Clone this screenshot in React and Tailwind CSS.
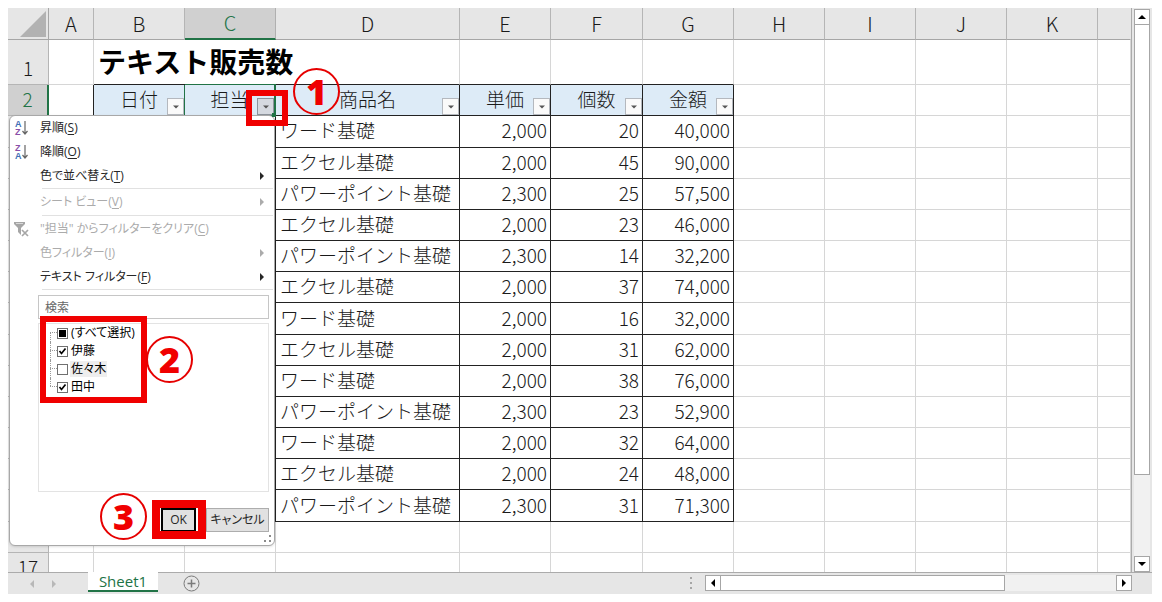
import React from 'react';

const ROWS = [
  ['ワード基礎', '2,000', '20', '40,000'],
  ['エクセル基礎', '2,000', '45', '90,000'],
  ['パワーポイント基礎', '2,300', '25', '57,500'],
  ['エクセル基礎', '2,000', '23', '46,000'],
  ['パワーポイント基礎', '2,300', '14', '32,200'],
  ['エクセル基礎', '2,000', '37', '74,000'],
  ['ワード基礎', '2,000', '16', '32,000'],
  ['エクセル基礎', '2,000', '31', '62,000'],
  ['ワード基礎', '2,000', '38', '76,000'],
  ['パワーポイント基礎', '2,300', '23', '52,900'],
  ['ワード基礎', '2,000', '32', '64,000'],
  ['エクセル基礎', '2,000', '24', '48,000'],
  ['パワーポイント基礎', '2,300', '31', '71,300'],
];

const COLUMNS = ['A', 'B', 'C', 'D', 'E', 'F', 'G', 'H', 'I', 'J', 'K', ''];
const HEADINGS = ['日付', '担当', '商品名', '単価', '個数', '金額'];

const LINE = 'border-r border-b border-[#d6d6d6]';
const INK = 'border-r border-b border-[#222222]';

// the selected cell is outlined in green, partly by its left neighbour
const headingBorder = (h) => {
  if (h === '日付') return 'border-r border-b border-r-[#217346] border-b-[#222222]';
  if (h === '担当') return 'border-r-2 border-b border-[#217346]';
  return INK;
};

const Triangle = ({ dir, className }) => {
  const paths = {
    up: 'M0 6 4 2l4 4z',
    down: 'M0 2h8L4 6z',
    left: 'M6 0v8L2 4z',
    right: 'M2 0v8l4-4z',
  };
  return (
    <svg className={className || 'w-2 h-2'} viewBox="0 0 8 8" fill="currentColor" aria-hidden="true">
      <path d={paths[dir]} />
    </svg>
  );
};

const FilterButton = ({ label, active }) => (
  <button
    type="button"
    aria-label={label}
    className={`absolute right-0 bottom-0 w-[17px] h-[17px] border flex items-center justify-center text-[#555555] ${
      active ? 'bg-[#d5d9e0] border-[#8d939c]' : 'bg-[#fafafa] border-[#b4b8be]'
    }`}
  >
    <Triangle dir="down" className="w-1.5 h-1.5" />
  </button>
);

const SortIcon = ({ top, bottom }) => (
  <svg className="w-4 h-4" viewBox="0 0 16 16" fill="none" aria-hidden="true">
    <text x="1" y="7" fontSize="9" fontWeight="600" fontFamily="Liberation Sans" fill={top === 'A' ? '#3f6fb5' : '#8a4fa8'}>
      {top}
    </text>
    <text x="1" y="15" fontSize="9" fontWeight="600" fontFamily="Liberation Sans" fill={bottom === 'A' ? '#3f6fb5' : '#8a4fa8'}>
      {bottom}
    </text>
    <path d="M11 1v13M8.500 11 11 14l2.500-3" stroke="#666666" strokeWidth="1.200" />
  </svg>
);

const ClearFilterIcon = () => (
  <svg className="w-4 h-4" viewBox="0 0 16 16" fill="none" aria-hidden="true">
    <path d="M0 1h11v2L7 7v7L4 11V7L0 3z" fill="#a6a6a6" />
    <path d="M2 2.500h7" stroke="#d8d8d8" />
    <path d="m8 9 6 6m0-6-6 6" stroke="#a6a6a6" strokeWidth="1.700" />
  </svg>
);

const MenuItem = ({ icon, text, hotkey, arrow, disabled }) => (
  <button
    type="button"
    disabled={disabled}
    className={`h-6 w-full flex items-center pl-1 pr-2 text-left ${disabled ? 'text-[#ababab]' : 'text-[#262626]'}`}
  >
    <span className="w-[26px] shrink-0">{icon}</span>
    <span className="flex-1 whitespace-nowrap">
      {text}(<u className="underline-offset-2">{hotkey}</u>)
    </span>
    {arrow && <Triangle dir="right" />}
  </button>
);

const Separator = () => <div className="ml-8 mr-px h-px shrink-0 bg-[#e1e1e1]" />;

const TreeItem = ({ label, state, selected, last }) => (
  <label className="relative h-[18px] flex items-center pl-[18px]">
    <span className={`absolute left-[11px] border-l border-dotted border-[#999999] ${last ? 'top-0 h-2' : state === 'mixed' ? 'top-2 bottom-0' : 'inset-y-0'}`} />
    <span className="absolute left-[11px] top-2 w-[7px] border-t border-dotted border-[#999999]" />
    <span className="relative w-[11px] h-[11px] shrink-0">
      <input
        type="checkbox"
        defaultChecked={state === 'on'}
        className="block appearance-none w-[11px] h-[11px] border border-[#707070] bg-white"
      />
      {state === 'on' && (
        <svg className="absolute inset-0 w-[11px] h-[11px] pointer-events-none" viewBox="0 0 11 11" fill="none" aria-hidden="true">
          <path d="m2.500 5 2 2.500 4-5" stroke="#000000" strokeWidth="1.700" />
        </svg>
      )}
      {state === 'mixed' && <span className="absolute inset-0.5 bg-black pointer-events-none" />}
    </span>
    <span className={`ml-0.5 px-px leading-4 ${selected ? 'bg-[#eeeeee]' : ''}`}>{label}</span>
  </label>
);

const FilterMenu = () => (
  <div className="absolute left-px top-[107px] w-[266px] h-[431px] flex flex-col bg-white border border-[#a8a8a8] rounded-md shadow-sm font-['Open_Sans','Noto_Sans_CJK_JP',sans-serif] text-[12px] leading-4 font-normal [font-feature-settings:'palt']">
    <MenuItem icon={<SortIcon top="A" bottom="Z" />} text="昇順" hotkey="S" />
    <MenuItem icon={<SortIcon top="Z" bottom="A" />} text="降順" hotkey="O" />
    <MenuItem text="色で並べ替え" hotkey="T" arrow />
    <Separator />
    <div className="py-px">
      <MenuItem text="シート ビュー" hotkey="V" arrow disabled />
    </div>
    <Separator />
    <div className="pt-px">
      <MenuItem icon={<ClearFilterIcon />} text={'"担当" からフィルターをクリア'} hotkey="C" disabled />
      <MenuItem text="色フィルター" hotkey="I" arrow disabled />
      <MenuItem text="テキスト フィルター" hotkey="F" arrow />
    </div>
    <Separator />
    <div className="flex-1 flex flex-col ml-7 mr-[5px] mt-[5px] gap-1">
      <input
        type="text"
        aria-label="検索"
        placeholder="検索"
        className="h-6 w-full border border-[#c6c6c6] px-1.5 placeholder:text-[#666666] outline-none"
      />
      <div className="h-[169px] border border-[#e3e3e3] text-black">
        <TreeItem label="(すべて選択)" state="mixed" />
        <TreeItem label="伊藤" state="on" />
        <TreeItem label="佐々木" state="off" selected />
        <TreeItem label="田中" state="on" last />
      </div>
    </div>
    <div className="flex justify-end gap-2.5 mr-[5px] mb-[13px] text-[#262626]">
      <button type="button" className="w-[35px] h-6 border-2 border-black bg-[#e1e1e1]">
        OK
      </button>
      <button type="button" className="w-[63px] h-6 border border-[#adadad] bg-[#e1e1e1] whitespace-nowrap">
        キャンセル
      </button>
    </div>
    <svg className="absolute right-0.5 bottom-0.5 w-2 h-2" viewBox="0 0 8 8" fill="#8a8a8a" aria-hidden="true">
      <path d="M5 0h2v2H5zM5 5h2v2H5zM0 5h2v2H0z" />
    </svg>
  </div>
);

const Step = ({ n, className }) => (
  <div
    className={`absolute w-[47px] h-[47px] rounded-full border-2 border-[#e60000] flex items-center justify-center font-['Open_Sans',sans-serif] text-[36px] leading-none font-extrabold text-[#f00000] ${className}`}
  >
    {n}
  </div>
);

const Marker = ({ className }) => <div className={`absolute border-[#f00000] pointer-events-none ${className}`} />;

const Sheet = () => (
  <table className="w-full h-[576px] table-fixed border-separate border-spacing-0 font-light text-[19px] leading-6 text-[#1a1a1a]">
    <colgroup>
      <col className="w-[41px]" />
      <col className="w-[45px]" />
      <col className="w-[91px]" />
      <col className="w-[91px]" />
      <col className="w-[184px]" />
      <col className="w-[91px]" />
      <col className="w-[92px]" />
      <col className="w-[91px]" />
      <col className="w-[91px]" />
      <col className="w-[91px]" />
      <col className="w-[91px]" />
      <col className="w-[91px]" />
      <col />
    </colgroup>
    <thead>
      <tr className="h-8 bg-[#e6e6e6] text-[20px]">
        <th className="p-0 border-r border-b border-[#a6a6a6]">
          <svg className="ml-auto mr-0.5 w-[26px] h-[26px]" viewBox="0 0 26 26" aria-hidden="true">
            <path d="M26 0v26H0z" fill="#b2b2b2" />
          </svg>
        </th>
        {COLUMNS.map((c) => (
          <th
            key={c}
            scope="col"
            className={`p-0 font-light border-r ${
              c === 'C'
                ? 'bg-[#d0d0d0] text-[#217346] border-b-2 border-r-[#b0b0b0] border-b-[#217346]'
                : c === ''
                  ? 'border-b border-r-[#e6e6e6] border-b-[#a6a6a6]'
                  : 'border-b border-r-[#b5b5b5] border-b-[#a6a6a6]'
            }`}
          >
            {c}
          </th>
        ))}
      </tr>
    </thead>
    <tbody>
      <tr className="h-[45px]">
        <th scope="row" className="p-0 pb-1 font-light align-bottom bg-[#e6e6e6] border-r border-b border-[#b5b5b5]">1</th>
        <td className={LINE} />
        <td className="p-0 pl-1 pb-0.5 border-b border-[#222222] text-[28px] leading-8 font-bold text-black whitespace-nowrap">
          テキスト販売数
        </td>
        <td className="border-b border-[#217346]" />
        {COLUMNS.slice(3).map((c, i) => (
          <td key={c} className={`border-r border-b border-r-[#d6d6d6] ${i < 4 ? 'border-b-[#222222]' : 'border-b-[#d6d6d6]'}`} />
        ))}
      </tr>
      <tr className="h-[31px]">
        <th scope="row" className="p-0 pb-0.5 font-light bg-[#d0d0d0] text-[#217346] border-r-2 border-b border-r-[#217346] border-b-[#b5b5b5]">2</th>
        <td className="border-r border-b border-r-[#222222] border-b-[#d6d6d6]" />
        {HEADINGS.map((h) => (
          <th
            key={h}
            scope="col"
            className={`relative p-0 pb-0.5 font-light bg-[#ddebf7] ${headingBorder(h)}`}
          >
            {h}
            <FilterButton label={`${h} フィルター`} active={h === '担当'} />
            {h === '担当' && <span className="absolute -right-0.5 -bottom-0.5 z-10 w-1 h-1 bg-[#217346]" />}
          </th>
        ))}
        {COLUMNS.slice(7).map((c) => (
          <td key={c} className={LINE} />
        ))}
      </tr>
      {ROWS.map(([name, price, count, total], r) => (
        <tr key={r} className="h-[31px]">
          <th scope="row" className="p-0 pb-0.5 font-light bg-[#e6e6e6] border-r border-b border-[#b5b5b5]">{r + 3}</th>
          <td className={LINE} />
          <td className={INK} />
          <td className={INK} />
          <td className={`p-0 pl-1 pb-0.5 whitespace-nowrap ${INK}`}>{name}</td>
          <td className={`p-0 pr-[3px] pb-0.5 text-right ${INK}`}>{price}</td>
          <td className={`p-0 pr-[3px] pb-0.5 text-right ${INK}`}>{count}</td>
          <td className={`p-0 pr-[3px] pb-0.5 text-right ${INK}`}>{total}</td>
          {COLUMNS.slice(7).map((c) => (
            <td key={c} className={LINE} />
          ))}
        </tr>
      ))}
      {[16, 17].map((n) => (
        <tr key={n} className="h-[31px]">
          <th scope="row" className="p-0 pb-0.5 font-light bg-[#e6e6e6] border-r border-b border-[#b5b5b5]">{n}</th>
          {COLUMNS.map((c) => (
            <td key={c} className={LINE} />
          ))}
        </tr>
      ))}
    </tbody>
  </table>
);

const ScrollButton = ({ dir, label }) => (
  <button
    type="button"
    aria-label={label}
    className="w-4 h-4 shrink-0 flex items-center justify-center bg-white border border-[#a6a6a6] text-black"
  >
    <Triangle dir={dir} />
  </button>
);

const StatusTabs = () => (
  <div className="h-[22px] flex items-start bg-[#e6e6e6] border-t border-[#ababab] pr-5">
    <div className="w-20 h-full flex items-center pl-5 gap-3.5 text-[#b8b8b8]">
      <Triangle dir="left" />
      <Triangle dir="right" />
    </div>
    <button
      type="button"
      className="w-[70px] h-5 -mt-px bg-white border-b-2 border-[#217346] text-[#217346] text-[15px] leading-4 font-['Open_Sans','Noto_Sans',sans-serif]"
    >
      Sheet1
    </button>
    <button type="button" aria-label="新しいシート" className="ml-[25px] mt-0.5 text-[#7a7a7a]">
      <svg className="w-[17px] h-[17px]" viewBox="0 0 17 17" fill="none" stroke="currentColor" aria-hidden="true">
        <circle cx="8.500" cy="8.500" r="7.500" />
        <path d="M8.500 4.500v8M4.500 8.500h8" strokeWidth="1.500" />
      </svg>
    </button>
    <div className="flex-1" />
    <svg className="w-1 h-3 mt-1 mr-3" viewBox="0 0 4 12" fill="#a6a6a6" aria-hidden="true">
      <path d="M1 0h2v2H1zM1 5h2v2H1zM1 10h2v2H1z" />
    </svg>
    <div className="w-[38%] mt-0.5 flex bg-[#f1f1f1]">
      <ScrollButton dir="left" label="左へ" />
      <div className="w-2/3 -ml-px bg-white border border-[#a6a6a6]" />
      <div className="flex-1" />
      <ScrollButton dir="right" label="右へ" />
    </div>
  </div>
);

const App = () => {
  return (
    <div className="h-screen bg-white pt-2 pb-2 pl-2 pr-[10px] font-['Noto_Sans_CJK_JP',sans-serif]">
      <div className="relative h-full flex flex-col">
        <div className="flex-1 min-h-0 flex bg-[#e6e6e6]">
          <div className="flex-1 min-w-0 overflow-hidden bg-white border-r border-[#ababab]">
            <Sheet />
          </div>
          <div className="w-5 shrink-0 flex flex-col items-center pt-px">
            <ScrollButton dir="up" label="上へ" />
            <div className="flex-1 w-4 flex flex-col bg-[#f1f1f1]">
              <div className="h-[85%] -mt-px bg-white border border-[#a6a6a6]" />
            </div>
            <ScrollButton dir="down" label="下へ" />
          </div>
        </div>
        <StatusTabs />

        <FilterMenu />

        <Marker className="left-[238px] top-[82px] w-[42px] h-9 border-6" />
        <Marker className="left-8 top-[308px] w-[107px] h-[87px] border-6" />
        <Marker className="left-36 top-[492px] w-[54px] h-[39px] border-8" />
        <Step n="1" className="left-[285px] top-[60px]" />
        <Step n="2" className="left-[138px] top-[328px]" />
        <Step n="3" className="left-[92px] top-[485px]" />
      </div>
    </div>
  );
};

export default App;
